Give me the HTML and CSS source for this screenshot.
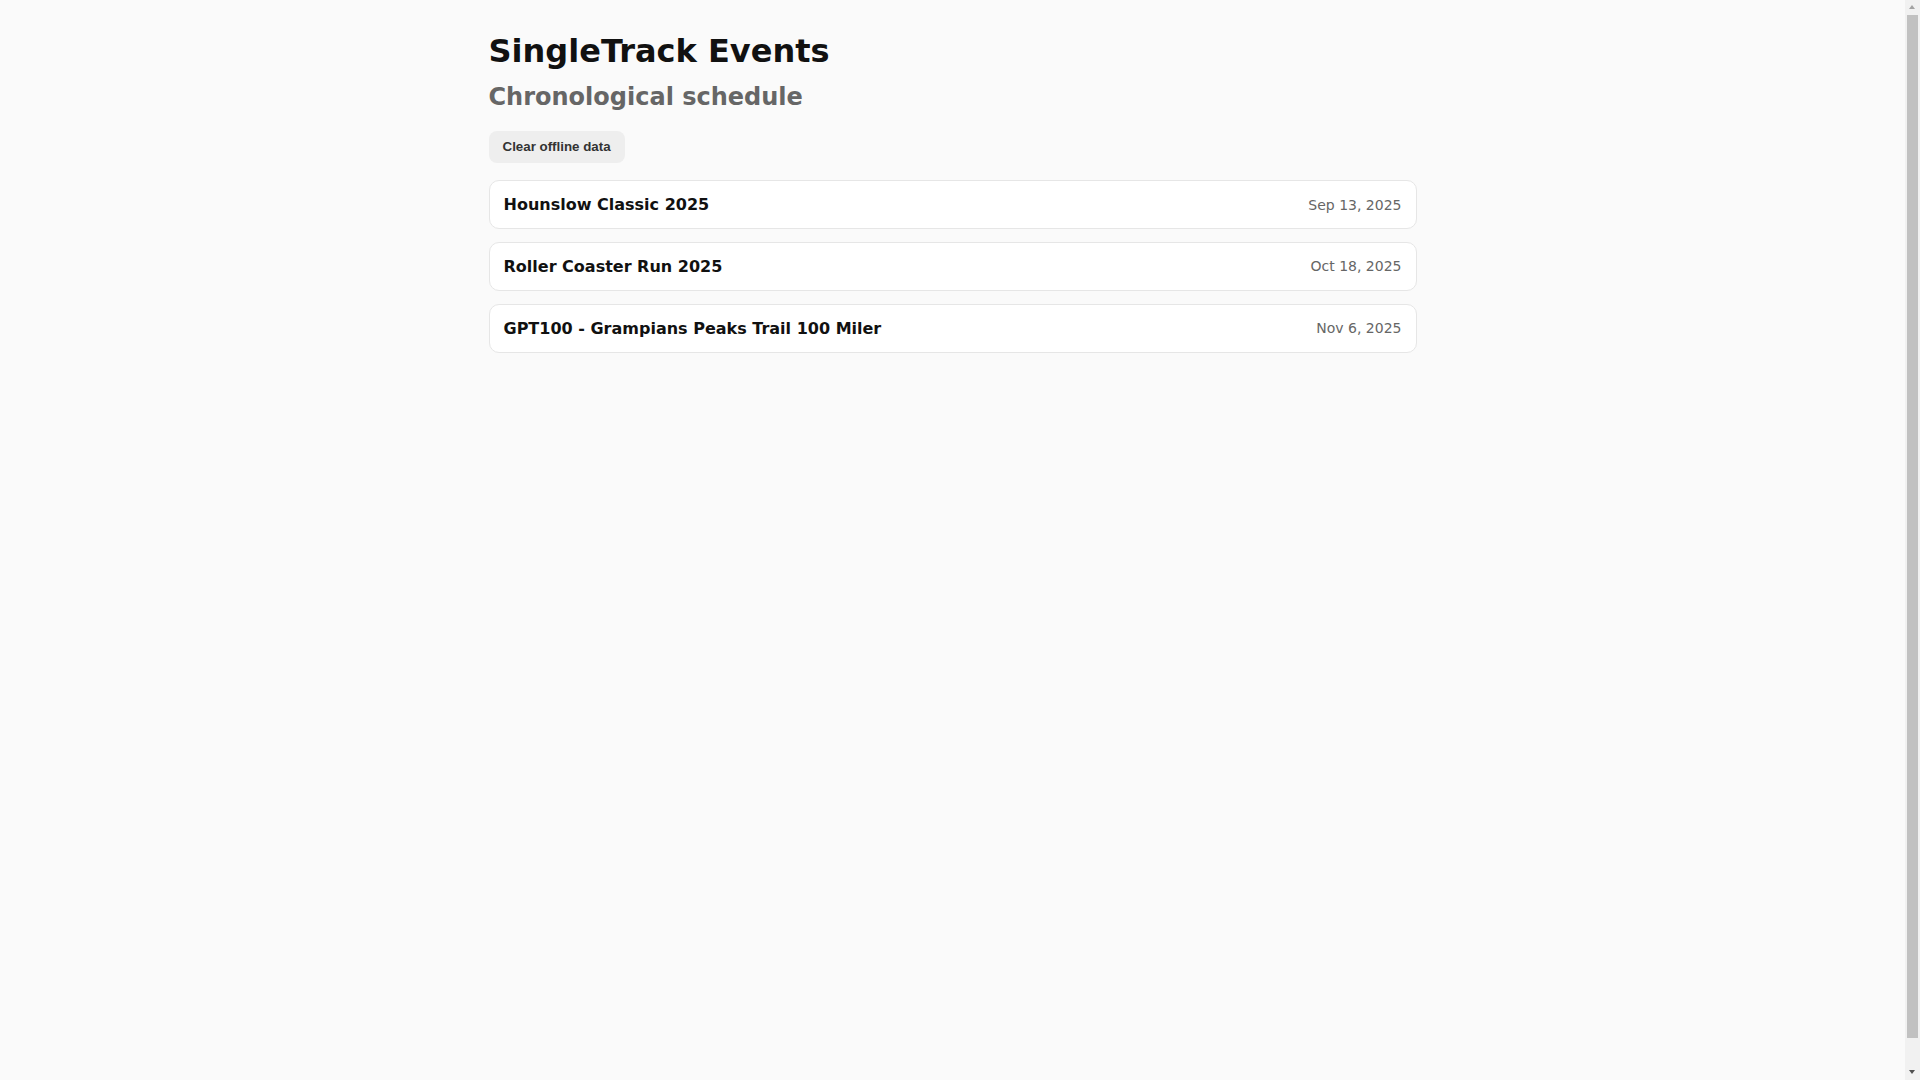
FILE: index.html
```html
<!DOCTYPE html>
<html lang="en">
<head>
<meta charset="utf-8">
<title>SingleTrack Events</title>
<link rel="stylesheet" href="styles.css">
</head>
<body>
<main class="page">
  <h1 class="title">SingleTrack Events</h1>
  <h2 class="subtitle">Chronological schedule</h2>
  <div class="toolbar">
    <button class="btn" type="button">Clear offline data</button>
  </div>
  <ul class="events">
    <li class="event"><span class="event-name">Hounslow Classic 2025</span><span class="event-date">Sep 13, 2025</span></li>
    <li class="event"><span class="event-name">Roller Coaster Run 2025</span><span class="event-date">Oct 18, 2025</span></li>
    <li class="event"><span class="event-name">GPT100 - Grampians Peaks Trail 100 Miler</span><span class="event-date">Nov 6, 2025</span></li>
  </ul>
</main>
<div class="scrollbar" aria-hidden="true">
  <span class="sb-arrow sb-up"></span>
  <span class="sb-thumb"></span>
  <span class="sb-arrow sb-down"></span>
</div>
</body>
</html>
```
FILE: styles.css
```css
html, body {
  margin: 0;
  padding: 0;
  background: #fafafa;
}
body {
  font-family: "DejaVu Sans", sans-serif;
  color: #111;
  padding-right: 15px;
  min-height: 100vh;
  overflow: hidden;
}
.page {
  max-width: 928px;
  margin: 0 auto;
  padding: 28px 16px 0;
}
.title {
  margin: 4px 0 0;
  font-size: 32px;
  font-weight: bold;
  line-height: normal;
  color: #111;
}
.subtitle {
  margin: 13px 0 0;
  font-size: 24px;
  font-weight: bold;
  line-height: normal;
  color: #666;
}
.toolbar {
  margin: 20px 0 17px;
  display: flex;
}
.btn {
  font-family: "Liberation Sans", Arial, sans-serif;
  font-size: 13.333px;
  font-weight: bold;
  line-height: 16px;
  color: #333;
  background: #eeeeee;
  border: 0;
  border-radius: 8px;
  padding: 8px 14px;
  cursor: pointer;
}
.events {
  list-style: none;
  margin: 0;
  padding: 0;
  display: flex;
  flex-direction: column;
  gap: 12.8px;
}
.event {
  display: flex;
  align-items: center;
  justify-content: space-between;
  background: #fff;
  border: 1px solid #e6e6e6;
  border-radius: 10px;
  padding: 14px 14px;
  line-height: normal;
}
.event-name {
  font-size: 16px;
  font-weight: bold;
  color: #111;
}
.event-date {
  font-size: 14px;
  color: #666;
}

/* emulated classic browser scrollbar */
.scrollbar {
  position: fixed;
  top: 0;
  right: 0;
  width: 15px;
  height: 100vh;
  background: #f1f1f1;
}
.sb-arrow {
  position: absolute;
  left: 4px;
  width: 0;
  height: 0;
  border-left: 3.5px solid transparent;
  border-right: 3.5px solid transparent;
}
.sb-up {
  top: 5px;
  border-bottom: 4px solid #a3a3a3;
}
.sb-down {
  bottom: 6px;
  border-top: 4px solid #505050;
}
.sb-thumb {
  position: absolute;
  top: 15px;
  left: 2px;
  width: 11px;
  height: 1023px;
  background: #c1c1c1;
}
```
